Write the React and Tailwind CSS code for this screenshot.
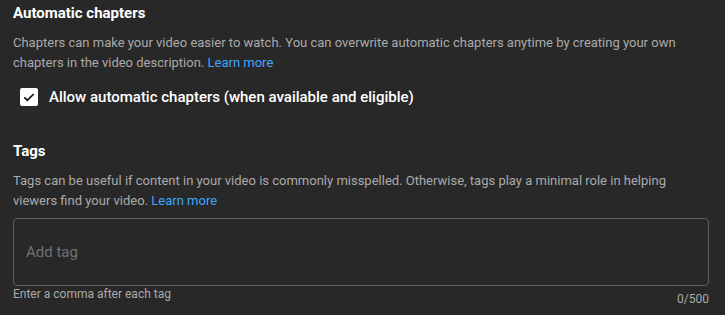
import React, { useState } from "react";

const LearnMore = () => (
  <a href="#" className="text-[#3ea6ff]">
    Learn more
  </a>
);

const App = () => {
  const [allowChapters, setAllowChapters] = useState(true);
  const [tag, setTag] = useState("");

  return (
    <div
      className="w-[725px] h-[315px] bg-[#282828] pl-[13px] pr-[16px] overflow-hidden"
      style={{ fontFamily: "Roboto, 'Liberation Sans', sans-serif" }}
    >
      {/* Automatic chapters */}
      <h2 className="pt-[3px] text-[15px] leading-[20px] font-bold text-white">
        Automatic chapters
      </h2>
      <p className="mt-[10px] text-[13px] leading-[20px] text-[#aaaaaa]">
        Chapters can make your video easier to watch. You can overwrite automatic chapters anytime by creating your own
        chapters in the video description. <LearnMore />
      </p>
      <label className="mt-[14px] ml-[7px] flex items-center gap-[11px] h-[20px] cursor-pointer">
        <button
          type="button"
          onClick={() => setAllowChapters(!allowChapters)}
          className={`w-[18px] h-[18px] rounded-[2px] flex items-center justify-center ${
            allowChapters ? "bg-white" : "border-2 border-[#aaaaaa]"
          }`}
        >
          {allowChapters && (
            <svg viewBox="0 0 24 24" className="w-[16px] h-[16px]">
              <path
                d="M5 12.5l4.5 4.5L19 7.5"
                fill="none"
                stroke="#0f0f0f"
                strokeWidth="2.6"
              />
            </svg>
          )}
        </button>
        <span className="text-[15px] leading-[20px] font-medium text-white">
          Allow automatic chapters (when available and eligible)
        </span>
      </label>

      {/* Tags */}
      <h2 className="mt-[34px] text-[15px] leading-[20px] font-bold text-white">Tags</h2>
      <p className="mt-[10px] text-[13px] leading-[20px] text-[#aaaaaa]">
        Tags can be useful if content in your video is commonly misspelled. Otherwise, tags play a minimal role in helping
        viewers find your video. <LearnMore />
      </p>
      <div className="mt-[7px] h-[68px] border border-[#5f5f5f] rounded-[4px] px-3 flex items-center">
        <input
          type="text"
          value={tag}
          onChange={(e) => setTag(e.target.value)}
          placeholder="Add tag"
          className="w-full bg-transparent text-[15px] text-white placeholder-[#717171] outline-none"
        />
      </div>
      <div className="flex justify-between items-start">
        <span className="text-[12px] leading-[16px] text-[#aaaaaa]">Enter a comma after each tag</span>
        <span className="mt-[5px] text-[12px] leading-[16px] text-[#aaaaaa]">{tag.length}/500</span>
      </div>
    </div>
  );
};

export default App;
